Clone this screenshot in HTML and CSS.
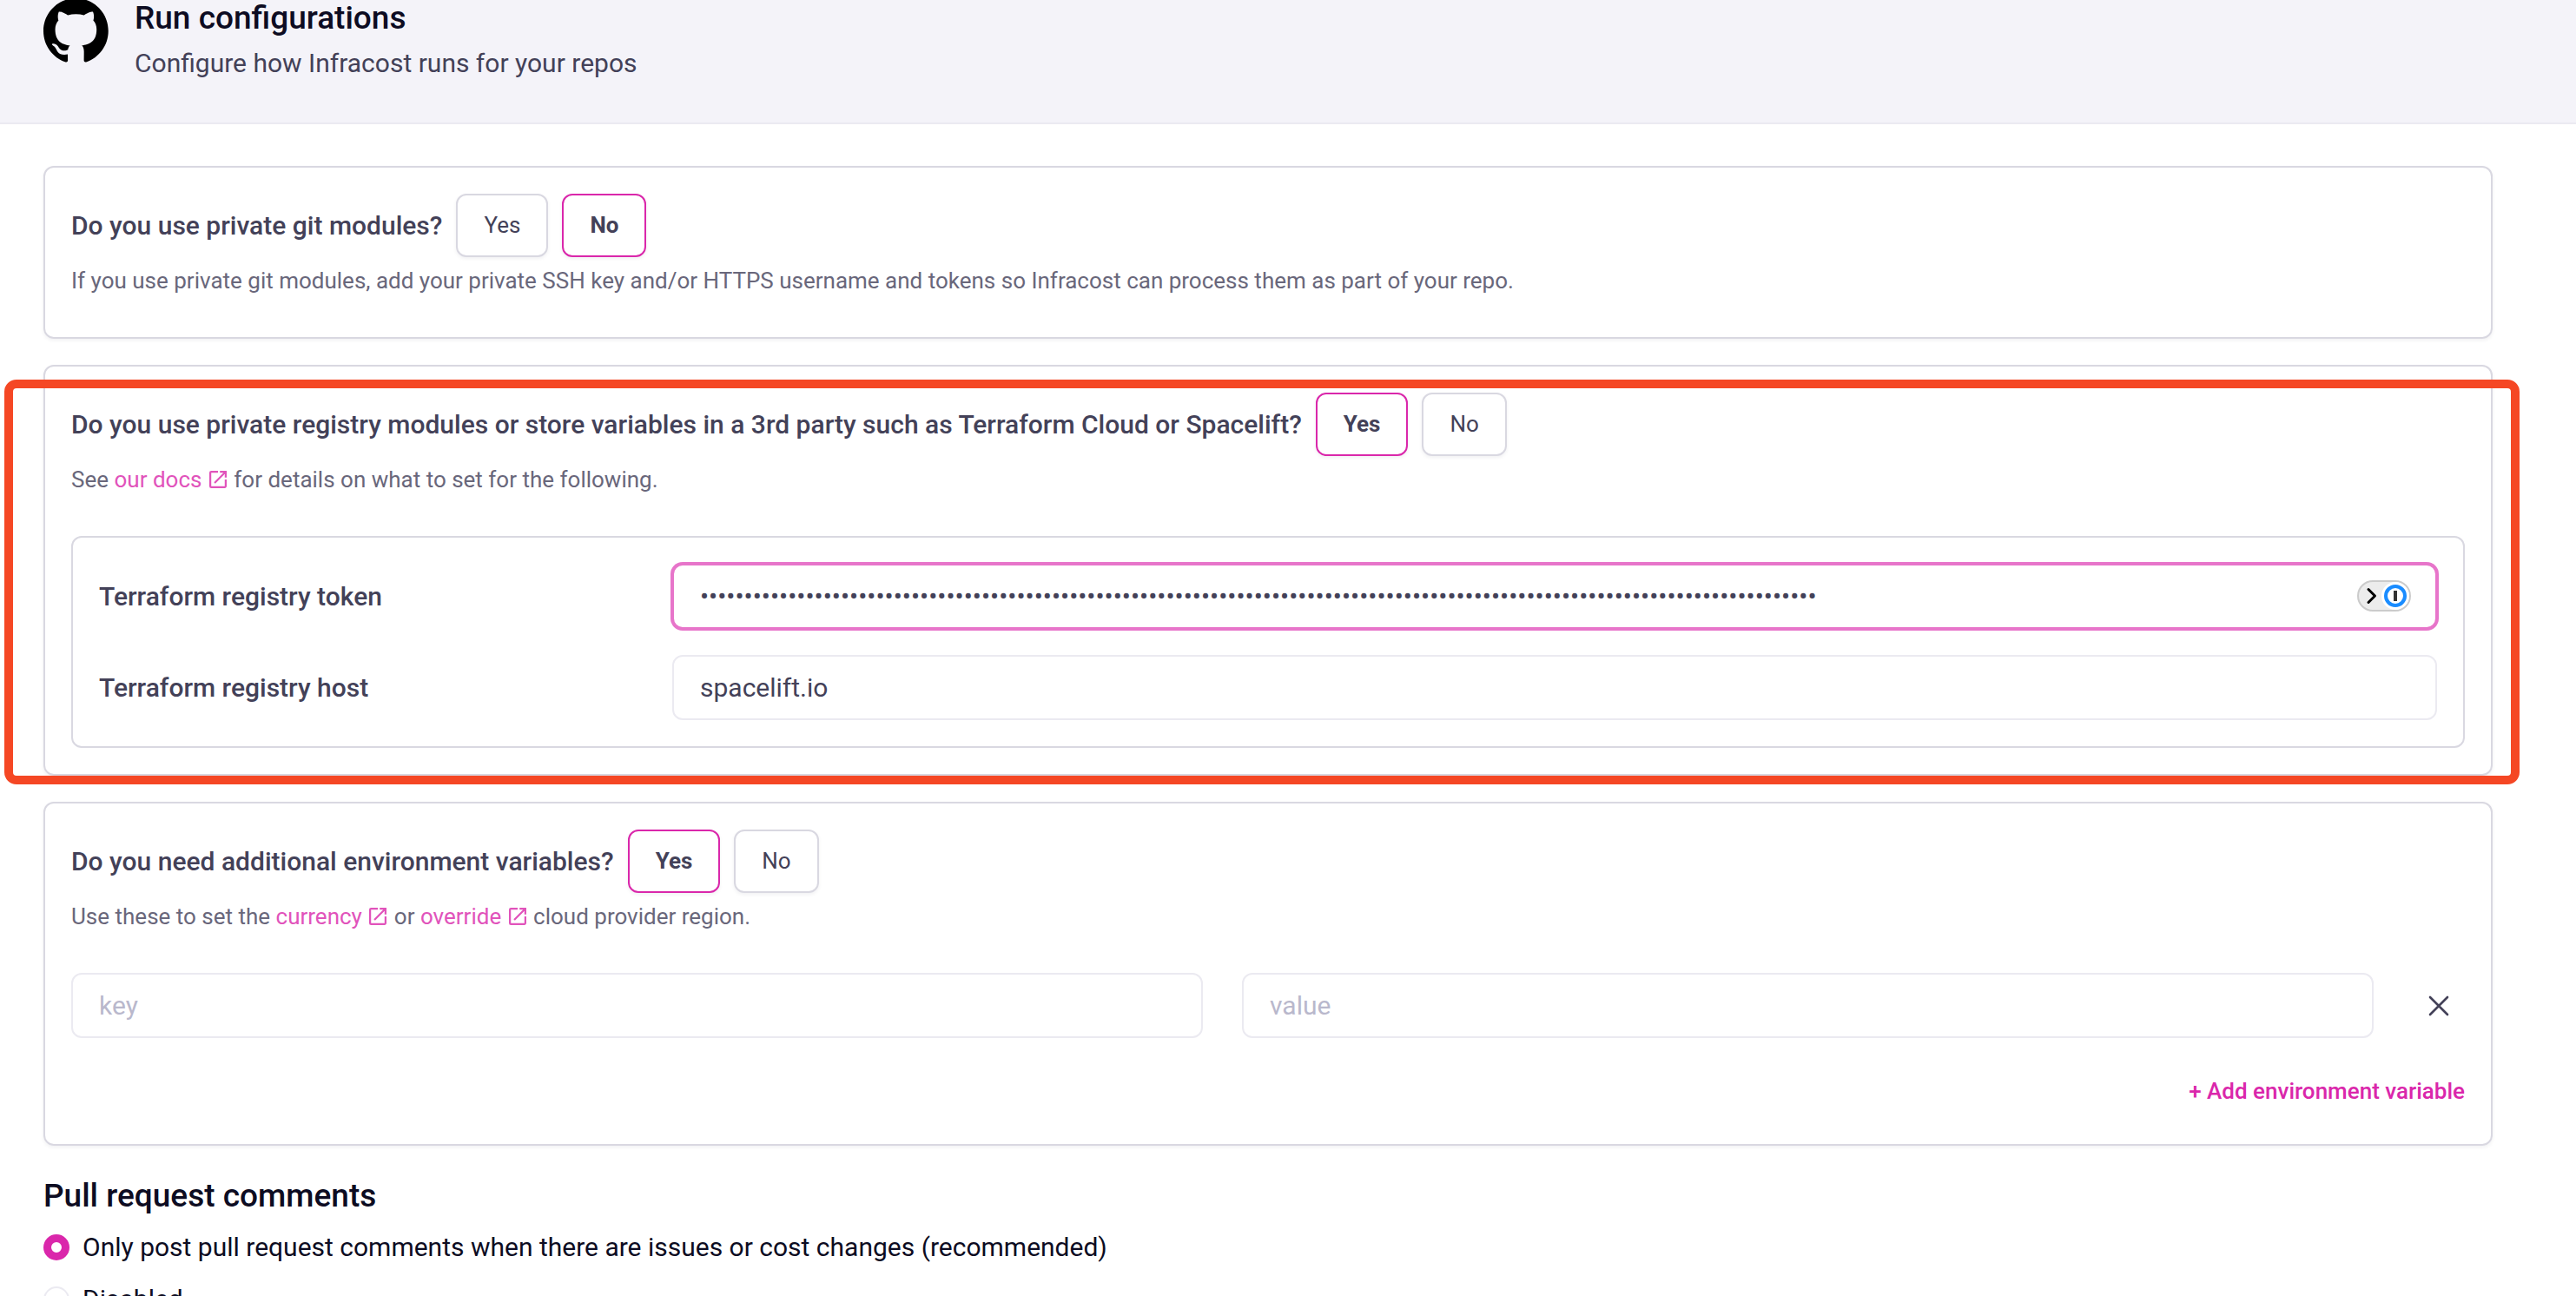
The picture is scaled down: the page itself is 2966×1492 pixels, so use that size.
FILE: index.html
```html
<!DOCTYPE html>
<html lang="en">
<head>
<meta charset="utf-8">
<title>Run configurations</title>
<link rel="stylesheet" href="styles.css">
</head>
<body>
<svg class="sprite" aria-hidden="true">
  <symbol id="external" viewBox="3 3 18 18"><path fill="currentColor" d="M19 19H5V5h7V3H5a2 2 0 0 0-2 2v14a2 2 0 0 0 2 2h14c1.1 0 2-.9 2-2v-7h-2v7zM14 3v2h3.59l-9.83 9.83 1.41 1.41L19 6.410V10h2V3h-7z"/></symbol>
</svg>
<header class="page-header">
  <svg class="logo" viewBox="0 0 98 98" role="img" aria-label="GitHub"><path fill="#000" d="M48.854 0C21.839 0 0 22 0 49.217c0 21.756 13.993 40.172 33.405 46.690 2.427.49 3.316-1.059 3.316-2.362 0-1.141-.08-5.052-.08-9.127-13.590 2.934-16.420-5.867-16.420-5.867-2.184-5.704-5.420-7.170-5.420-7.170-4.448-3.015.324-3.015.324-3.015 4.934.326 7.523 5.052 7.523 5.052 4.367 7.496 11.404 5.378 14.235 4.074.404-3.178 1.699-5.378 3.074-6.600-10.839-1.141-22.243-5.378-22.243-24.283 0-5.378 1.940-9.778 5.014-13.200-.485-1.222-2.184-6.275.486-13.038 0 0 4.125-1.304 13.426 5.052a46.970 46.970 0 0 1 12.214-1.630c4.125 0 8.330.571 12.213 1.630 9.302-6.356 13.427-5.052 13.427-5.052 2.670 6.763.97 11.816.485 13.038 3.155 3.422 5.015 7.822 5.015 13.200 0 18.905-11.404 23.060-22.324 24.283 1.780 1.548 3.316 4.481 3.316 9.126 0 6.600-.08 11.897-.08 13.526 0 1.304.89 2.853 3.316 2.364 19.412-6.520 33.405-24.935 33.405-46.691C97.707 22 75.788 0 48.854 0z"/></svg>
  <div class="header-text">
    <h1 class="title">Run configurations</h1>
    <p class="subtitle">Configure how Infracost runs for your repos</p>
  </div>
</header>
<main class="content">
  <section class="card">
    <div class="question-row">
      <h2 class="question">Do you use private git modules?</h2>
      <button class="choice" type="button">Yes</button>
      <button class="choice selected" type="button">No</button>
    </div>
    <p class="hint">If you use private git modules, add your private SSH key and/or HTTPS username and tokens so Infracost can process them as part of your repo.</p>
  </section>

  <section class="card highlighted">
    <div class="question-row">
      <h2 class="question">Do you use private registry modules or store variables in a 3rd party such as Terraform Cloud or Spacelift?</h2>
      <button class="choice selected" type="button">Yes</button>
      <button class="choice" type="button">No</button>
    </div>
    <p class="hint">See <a class="link" href="#docs">our docs <svg class="ext"><use href="#external"/></svg></a> for details on what to set for the following.</p>
    <div class="fields">
      <div class="field">
        <label class="label" for="token">Terraform registry token</label>
        <div class="control">
          <input class="input focused" id="token" type="password" value="0123456789abcdef0123456789abcdef0123456789abcdef0123456789abcdef0123456789abcdef0123456789abcdef0123456789abcdef0123456789abcde">
          <button class="manager" type="button" aria-label="Password manager"><svg viewBox="0 0 62 36"><rect x="1" y="1" width="60" height="34" rx="17" fill="#ececec" stroke="#cbcbcb" stroke-width="2"/><path d="M13 10.500l7.500 7.500-7.500 7.500" fill="none" stroke="#000" stroke-width="3" stroke-linecap="round" stroke-linejoin="round"/><circle cx="44" cy="18" r="16" fill="#fff"/><circle cx="44" cy="18" r="11" fill="#fff" stroke="#1a8cff" stroke-width="4"/><path d="M42 12h4v12h-4z" fill="#333"/></svg></button>
        </div>
      </div>
      <div class="field">
        <label class="label" for="host">Terraform registry host</label>
        <div class="control"><input class="input" id="host" type="text" value="spacelift.io"></div>
      </div>
    </div>
  </section>

  <section class="card">
    <div class="question-row">
      <h2 class="question">Do you need additional environment variables?</h2>
      <button class="choice selected" type="button">Yes</button>
      <button class="choice" type="button">No</button>
    </div>
    <p class="hint">Use these to set the <a class="link" href="#currency">currency <svg class="ext"><use href="#external"/></svg></a> or <a class="link" href="#override">override <svg class="ext"><use href="#external"/></svg></a> cloud provider region.</p>
    <div class="env-row">
      <input class="input" type="text" placeholder="key" aria-label="key">
      <input class="input" type="text" placeholder="value" aria-label="value">
      <button class="remove" type="button" aria-label="Remove"><svg viewBox="0 0 24 24"><path d="M2 2l20 20M22 2L2 22" fill="none" stroke="#434158" stroke-width="2.600" stroke-linecap="round"/></svg></button>
    </div>
    <button class="add" type="button">+ Add environment variable</button>
  </section>

  <fieldset class="comments">
    <legend class="legend">Pull request comments</legend>
    <label class="option"><input class="radio" type="radio" name="comments" checked>Only post pull request comments when there are issues or cost changes (recommended)</label>
    <label class="option"><input class="radio" type="radio" name="comments">Disabled</label>
  </fieldset>
</main>
</body>
</html>
```
FILE: styles.css
```css
* { box-sizing: border-box; }
body {
  margin: 0;
  height: 100vh;
  overflow: hidden;
  background: #fff;
  color: #434158;
  font-family: Roboto, "Liberation Sans", sans-serif;
  font-size: 30px;
  line-height: 45px;
}
h1, h2, p { margin: 0; }
button, input { font: inherit; color: inherit; }
button { cursor: pointer; }
.sprite { display: none; }

.page-header {
  display: flex;
  gap: 30px;
  margin-top: -2px;
  padding: 0 50px 45px;
  background: #f4f3f9;
  border-bottom: 2px solid #ebeaf1;
}
.logo { width: 75px; height: 75px; flex: none; }
.header-text { display: flex; flex-direction: column; gap: 6px; }
.title { font-size: 37px; font-weight: 500; line-height: 46px; color: #0d0c22; }
.subtitle { line-height: 46px; }

.content {
  display: flex;
  flex-direction: column;
  gap: 30px;
  padding: 48px 96px 48px 50px;
}
.card {
  padding: 30px;
  border: 2px solid #d9d8e1;
  border-radius: 12px;
  box-shadow: 0 2px 4px rgba(20, 18, 50, .06);
}
.highlighted { position: relative; }
.highlighted::after {
  content: "";
  position: absolute;
  inset: 15px -33px -12px -47px;
  border: 10px solid #f54724;
  border-radius: 14px;
  pointer-events: none;
}
.question-row { display: flex; align-items: center; gap: 16px; }
.question { font-size: 30px; font-weight: 500; }
.choice {
  height: 73px;
  padding: 0 30px;
  background: #fff;
  border: 2px solid #d9d8e1;
  border-radius: 12px;
  box-shadow: 0 2px 4px rgba(20, 18, 50, .06);
  font-size: 26px;
}
.choice.selected { border-color: #da27ab; font-weight: 700; }
.hint {
  margin: 8px 0 16px;
  font-size: 26px;
  line-height: 38px;
  color: #69677b;
}
.link { color: #e153bb; text-decoration: none; }
.ext { width: 20px; height: 20px; margin: 0 2px; vertical-align: -1px; }

.fields {
  display: flex;
  flex-direction: column;
  gap: 30px;
  margin-top: 46px;
  padding: 30px;
  border: 2px solid #d9d8e1;
  border-radius: 12px;
}
.field { display: flex; align-items: center; }
.label { width: 660px; flex: none; font-weight: 500; }
.control { flex: 1; display: flex; position: relative; }
.input {
  flex: 1;
  min-width: 0;
  height: 75px;
  padding: 0 30px;
  background: #fff;
  border: 2px solid #ebeaf1;
  border-radius: 12px;
  outline: none;
}
.input::placeholder { color: #b9b8cc; opacity: 1; }
.focused { border-color: #e775ca; box-shadow: 0 0 0 2px #e775ca; }
.manager {
  position: absolute;
  right: 30px;
  top: 19px;
  width: 62px;
  height: 36px;
  padding: 0;
  border: 0;
  background: none;
}
.manager svg, .remove svg { display: block; }

.env-row { display: flex; align-items: center; gap: 45px; margin-top: 46px; }
.remove {
  display: flex;
  justify-content: center;
  width: 60px;
  padding: 0;
  border: 0;
  background: none;
}
.remove svg { width: 24px; height: 24px; }
.add {
  display: block;
  margin: 42px 0 12px auto;
  padding: 0;
  border: 0;
  background: none;
  font-size: 26px;
  font-weight: 500;
  line-height: 38px;
  color: #da27ab;
}

.comments {
  display: flex;
  flex-direction: column;
  gap: 15px;
  margin: 0;
  padding: 0;
  border: 0;
  color: #0d0c22;
}
.legend { padding: 0; margin-bottom: 8px; font-size: 37px; font-weight: 500; line-height: 56px; }
.option { display: flex; align-items: center; gap: 15px; }
.radio {
  appearance: none;
  width: 30px;
  height: 30px;
  margin: 0;
  background: #fff;
  border: 2px solid #ebeaf1;
  border-radius: 50%;
}
.radio:checked { border: 9px solid #da27ab; }
```
